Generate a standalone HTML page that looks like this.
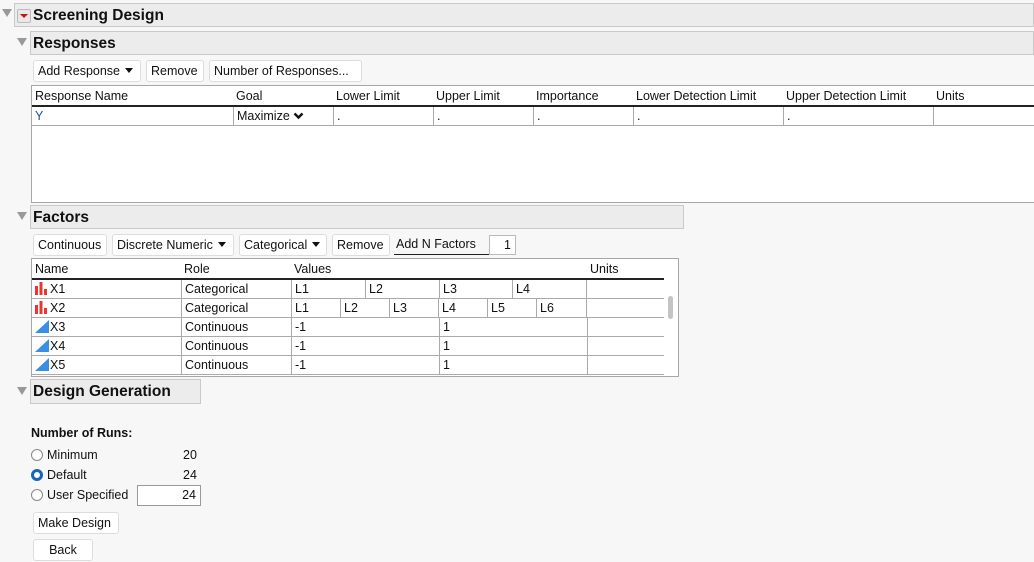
<!DOCTYPE html>
<html><head><style>
body{margin:0;width:1034px;height:562px;background:#f7f7f7;font-family:"Liberation Sans",sans-serif;font-size:12.5px;color:#111;position:relative;overflow:hidden}
.a{position:absolute;white-space:nowrap}
.hd{position:absolute;background:#ececec;border:1px solid #c9c9c9;font-weight:bold;font-size:15.5px;box-sizing:border-box;padding-left:2px;padding-top:1px;line-height:22px;white-space:nowrap}
.tri{position:absolute;width:0;height:0;border-left:5px solid transparent;border-right:5px solid transparent;border-top:8px solid #999}
.btn{position:absolute;background:#fff;border:1px solid #ddd;border-radius:3px;box-sizing:border-box;height:22px;line-height:20px;padding:0 4px;font-size:12.5px;white-space:nowrap}
.dd{display:inline-block;width:0;height:0;border-left:4px solid transparent;border-right:4px solid transparent;border-top:5px solid #111;vertical-align:middle;margin-left:5px;margin-top:-2px}
.tbl{position:absolute;background:#fff;border:1px solid #a7a7a7;box-sizing:border-box}
.c{position:absolute;box-sizing:border-box;border-right:1px solid #aaa;border-bottom:1px solid #aaa;height:19px;line-height:18px;padding-left:3px;white-space:nowrap}
.h{position:absolute;line-height:18px;padding-left:3px;white-space:nowrap}
.cat{display:inline-block;width:14px;height:13px;vertical-align:-2px;margin-right:1px}
.rad{position:absolute;width:10px;height:10px;border:1px solid #888;border-radius:50%;background:#fff}
</style></head><body>
<div class="tri" style="left:2px;top:9px"></div>
<div class="hd" style="left:14px;top:3px;width:1020px;height:24px;padding-left:18px">Screening Design</div>
<div class="a" style="left:17px;top:9px;width:12px;height:12px;background:#e8e8e8;border:1px solid #bbb;border-radius:2px"><div style="position:absolute;left:2px;top:4px;border-left:4px solid transparent;border-right:4px solid transparent;border-top:4px solid #d01010"></div></div>

<div class="tri" style="left:17px;top:38px"></div>
<div class="hd" style="left:30px;top:31px;width:1004px;height:24px">Responses</div>
<div class="btn" style="left:33px;top:60px;width:108px">Add Response<span class="dd"></span></div>
<div class="btn" style="left:146px;top:60px;width:58px">Remove</div>
<div class="btn" style="left:209px;top:60px;width:153px">Number of Responses...</div>
<div class="tbl" style="left:31px;top:85px;width:1004px;height:118px">
<div class="h" style="left:0;top:1px">Response Name</div>
<div class="h" style="left:201px;top:1px">Goal</div>
<div class="h" style="left:301px;top:1px">Lower Limit</div>
<div class="h" style="left:401px;top:1px">Upper Limit</div>
<div class="h" style="left:501px;top:1px">Importance</div>
<div class="h" style="left:601px;top:1px">Lower Detection Limit</div>
<div class="h" style="left:751px;top:1px">Upper Detection Limit</div>
<div class="h" style="left:901px;top:1px">Units</div>
<div class="a" style="left:0;top:19px;width:1004px;height:2px;background:#222"></div>
<div class="c" style="left:0;top:21px;width:202px;color:#1a4fa0">Y</div>
<div class="c" style="left:202px;top:21px;width:100px">Maximize <svg width="11" height="8" viewBox="0 0 11 8" style="vertical-align:0"><path d="M1.5 1.5L5.5 5.5L9.5 1.5" stroke="#111" stroke-width="2.4" fill="none"/></svg></div>
<div class="c" style="left:302px;top:21px;width:100px">.</div>
<div class="c" style="left:402px;top:21px;width:100px">.</div>
<div class="c" style="left:502px;top:21px;width:100px">.</div>
<div class="c" style="left:602px;top:21px;width:150px">.</div>
<div class="c" style="left:752px;top:21px;width:150px">.</div>
<div class="c" style="left:902px;top:21px;width:102px;border-right:0"></div>
</div>

<div class="tri" style="left:17px;top:212px"></div>
<div class="hd" style="left:30px;top:205px;width:654px;height:24px">Factors</div>
<div class="btn" style="left:33px;top:234px;width:74px">Continuous</div>
<div class="btn" style="left:112px;top:234px;width:122px">Discrete Numeric<span class="dd"></span></div>
<div class="btn" style="left:239px;top:234px;width:88px">Categorical<span class="dd"></span></div>
<div class="btn" style="left:332px;top:234px;width:58px">Remove</div>
<div class="a" style="left:396px;top:237px">Add N Factors</div>
<div class="a" style="left:394px;top:254px;width:95px;height:1px;background:#222"></div>
<div class="a" style="left:489px;top:235px;width:27px;height:20px;background:#fff;border:1px solid #bbb;box-sizing:border-box;text-align:right;padding-right:4px;line-height:18px">1</div>
<div class="tbl" style="left:31px;top:258px;width:648px;height:119px">
<div class="h" style="left:0;top:1px">Name</div>
<div class="h" style="left:149px;top:1px">Role</div>
<div class="h" style="left:259px;top:1px">Values</div>
<div class="h" style="left:555px;top:1px">Units</div>
<div class="a" style="left:0;top:19px;width:632px;height:2px;background:#222"></div>
<div class="c" style="left:0;top:21px;width:150px"><svg class="cat" viewBox="0 0 14 13"><rect x="0" y="4" width="3" height="9" fill="#e33"/><rect x="4.5" y="0" width="3" height="13" fill="#e33"/><rect x="9" y="7" width="3" height="6" fill="#e33"/></svg>X1</div>
<div class="c" style="left:150px;top:21px;width:110px">Categorical</div>
<div class="c" style="left:260px;top:21px;width:74px">L1</div><div class="c" style="left:334px;top:21px;width:74px">L2</div><div class="c" style="left:408px;top:21px;width:73px">L3</div><div class="c" style="left:481px;top:21px;width:74px">L4</div><div class="c" style="left:555px;top:21px;width:77px;border-right:0"></div>
<div class="c" style="left:0;top:40px;width:150px"><svg class="cat" viewBox="0 0 14 13"><rect x="0" y="4" width="3" height="9" fill="#e33"/><rect x="4.5" y="0" width="3" height="13" fill="#e33"/><rect x="9" y="7" width="3" height="6" fill="#e33"/></svg>X2</div>
<div class="c" style="left:150px;top:40px;width:110px">Categorical</div>
<div class="c" style="left:260px;top:40px;width:49px">L1</div><div class="c" style="left:309px;top:40px;width:49px">L2</div><div class="c" style="left:358px;top:40px;width:49px">L3</div><div class="c" style="left:407px;top:40px;width:49px">L4</div><div class="c" style="left:456px;top:40px;width:49px">L5</div><div class="c" style="left:505px;top:40px;width:50px">L6</div><div class="c" style="left:555px;top:40px;width:77px;border-right:0"></div>
<div class="c" style="left:0;top:59px;width:150px"><svg class="cat" viewBox="0 0 14 13"><polygon points="0,13 14,0 14,13" fill="#3a8ee6"/></svg>X3</div>
<div class="c" style="left:150px;top:59px;width:110px">Continuous</div><div class="c" style="left:260px;top:59px;width:148px">-1</div><div class="c" style="left:408px;top:59px;width:148px">1</div><div class="c" style="left:556px;top:59px;width:76px;border-right:0"></div>
<div class="c" style="left:0;top:78px;width:150px"><svg class="cat" viewBox="0 0 14 13"><polygon points="0,13 14,0 14,13" fill="#3a8ee6"/></svg>X4</div>
<div class="c" style="left:150px;top:78px;width:110px">Continuous</div><div class="c" style="left:260px;top:78px;width:148px">-1</div><div class="c" style="left:408px;top:78px;width:148px">1</div><div class="c" style="left:556px;top:78px;width:76px;border-right:0"></div>
<div class="c" style="left:0;top:97px;width:150px"><svg class="cat" viewBox="0 0 14 13"><polygon points="0,13 14,0 14,13" fill="#3a8ee6"/></svg>X5</div>
<div class="c" style="left:150px;top:97px;width:110px">Continuous</div><div class="c" style="left:260px;top:97px;width:148px">-1</div><div class="c" style="left:408px;top:97px;width:148px">1</div><div class="c" style="left:556px;top:97px;width:76px;border-right:0"></div>
<div class="a" style="left:636px;top:37px;width:5px;height:23px;background:#c4c4c4;border-radius:3px"></div>
</div>

<div class="tri" style="left:17px;top:387px"></div>
<div class="hd" style="left:30px;top:379px;width:171px;height:25px">Design Generation</div>
<div class="a" style="left:31px;top:426px;font-weight:bold">Number of Runs:</div>
<div class="rad" style="left:31px;top:449px"></div><div class="a" style="left:47px;top:448px">Minimum</div><div class="a" style="left:183px;top:448px">20</div>
<div class="rad" style="left:31px;top:469px;border:3px solid #1565c0;width:6px;height:6px"></div><div class="a" style="left:47px;top:468px">Default</div><div class="a" style="left:183px;top:468px">24</div>
<div class="rad" style="left:31px;top:489px"></div><div class="a" style="left:47px;top:488px">User Specified</div>
<div class="a" style="left:137px;top:485px;width:64px;height:21px;background:#fff;border:1px solid #999;box-sizing:border-box;text-align:right;padding-right:4px;line-height:19px">24</div>
<div class="btn" style="left:33px;top:512px;width:86px">Make Design</div>
<div class="btn" style="left:33px;top:539px;width:60px;text-align:center">Back</div>
</body></html>
